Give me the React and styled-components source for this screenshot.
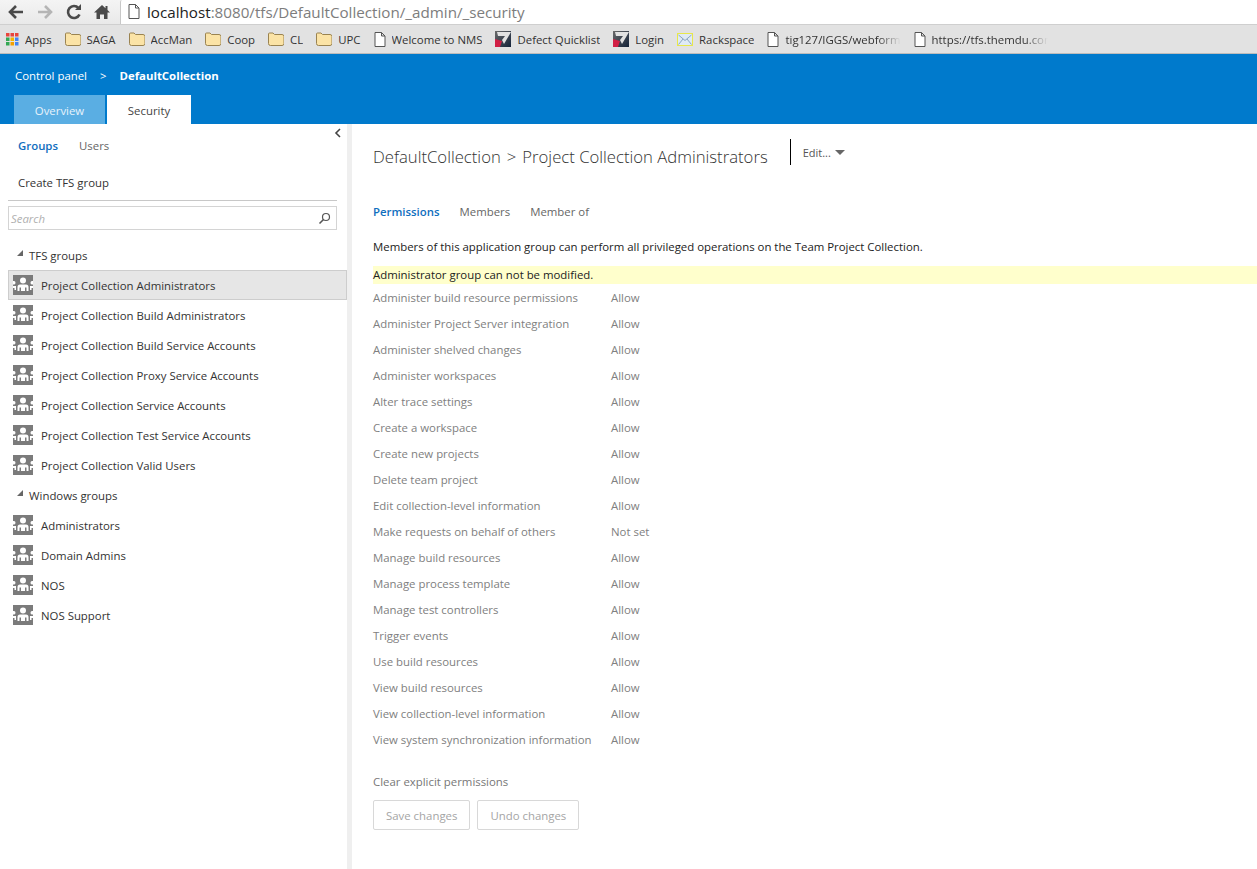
import React from 'react';
import styled, { createGlobalStyle } from 'styled-components';

const tfsGroups = [
  'Project Collection Administrators',
  'Project Collection Build Administrators',
  'Project Collection Build Service Accounts',
  'Project Collection Proxy Service Accounts',
  'Project Collection Service Accounts',
  'Project Collection Test Service Accounts',
  'Project Collection Valid Users',
];
const windowsGroups = ['Administrators', 'Domain Admins', 'NOS', 'NOS Support'];

const permissions = [
  ['Administer build resource permissions', 'Allow'],
  ['Administer Project Server integration', 'Allow'],
  ['Administer shelved changes', 'Allow'],
  ['Administer workspaces', 'Allow'],
  ['Alter trace settings', 'Allow'],
  ['Create a workspace', 'Allow'],
  ['Create new projects', 'Allow'],
  ['Delete team project', 'Allow'],
  ['Edit collection-level information', 'Allow'],
  ['Make requests on behalf of others', 'Not set'],
  ['Manage build resources', 'Allow'],
  ['Manage process template', 'Allow'],
  ['Manage test controllers', 'Allow'],
  ['Trigger events', 'Allow'],
  ['Use build resources', 'Allow'],
  ['View build resources', 'Allow'],
  ['View collection-level information', 'Allow'],
  ['View system synchronization information', 'Allow'],
];

const FolderIcon = () => (
  <svg width="16" height="14" viewBox="0 0 16 14">
    <path d="M.5 3V2Q.5 1 1.500 1h3.500l1.500 1.500h7.500q2 0 2 2v7q0 2-2 2H2.500q-2 0-2-2z" fill="#fbe3a6" stroke="#9a8350" />
  </svg>
);

const PageIcon = () => (
  <svg width="12" height="15" viewBox="0 0 12 15">
    <path d="M1 .5h6.500l3.500 3.500v10.500H1zM7.500.5v3.500H11" fill="#fff" stroke="#555" />
  </svg>
);

const AppsIcon = () => (
  <svg width="13" height="13" viewBox="0 0 13 13">
    {['#e8453c', '#e8453c', '#e8453c', '#34a853', '#f4b400', '#4285f4', '#34a853', '#f4a000', '#4285f4'].map((c, i) => (
      <rect key={i} x={(i % 3) * 4.5} y={Math.floor(i / 3) * 4.5} width="3.500" height="3.500" fill={c} />
    ))}
  </svg>
);

const LogoIcon = () => (
  <svg width="16" height="16" viewBox="0 0 16 16">
    <defs>
      <linearGradient id="logoBg" x1="0" y1="0" x2="1" y2="1">
        <stop offset="0" stopColor="#6a6a6a" />
        <stop offset="1" stopColor="#14233a" />
      </linearGradient>
    </defs>
    <rect width="16" height="16" fill="url(#logoBg)" />
    <path d="M0 8l7 2-2 6H0z" fill="#d11f45" />
    <path d="M2 1h14L9 13 7 9l3-4H3z" fill="#e2e2e2" />
  </svg>
);

const MailIcon = () => (
  <svg width="16" height="13" viewBox="0 0 16 13">
    <rect x=".5" y=".5" width="15" height="12" fill="#dfeaf5" stroke="#e8e84a" />
    <path d="M1.500 2l6.500 5.500L14.500 2M1.500 11.500l4.500-5.500M14.500 11.500L10 6" fill="none" stroke="#8aa5c0" />
  </svg>
);

const GroupIcon = () => (
  <svg width="20" height="20" viewBox="0 0 20 20">
    <rect width="20" height="20" fill="#7b7b7b" />
    <circle cx="10" cy="5.500" r="3" fill="#fff" />
    <path d="M4.500 16v-4q0-2.500 2.500-2.500h6q2.500 0 2.500 2.500v4h-2v-3.500H12V16H8v-3.500H6.500V16z" fill="#fff" />
    <path d="M0 6h1q1.500 0 1.500 1.800T1 9.500H0z" fill="#fff" />
    <path d="M20 6h-1q-1.500 0-1.500 1.800T19 9.500h1z" fill="#fff" />
    <path d="M0 11h3v4H1.500v-2H0zM20 11h-3v4h1.500v-2H20z" fill="#fff" />
  </svg>
);

const Nav = ({ disabled, d }) => (
  <NavButton $disabled={disabled}>
    <svg width="18" height="18" viewBox="0 0 18 18">
      <path d={d} fill="none" stroke="currentColor" strokeWidth="2.600" />
    </svg>
  </NavButton>
);

const Bookmark = ({ icon, label, faded }) => (
  <BookmarkItem>
    {icon}
    <BookmarkLabel $faded={faded}>{label}</BookmarkLabel>
  </BookmarkItem>
);

const GroupList = ({ title, items, selected }) => (
  <>
    <GroupHeader>
      <Caret />
      {title}
    </GroupHeader>
    {items.map((name) => (
      <GroupRow key={name} $selected={name === selected}>
        <GroupIcon />
        {name}
      </GroupRow>
    ))}
  </>
);

export default function App() {
  return (
    <Page>
      <GlobalStyle />
      <AddressBar>
        <Nav d="M16 9H3M9 3L3 9l6 6" />
        <Nav disabled d="M2 9h13M9 3l6 6-6 6" />
        <ReloadButton>
          <svg width="18" height="18" viewBox="0 0 18 18">
            <path d="M14.500 11.500A6 6 0 1 1 13.500 5" fill="none" stroke="currentColor" strokeWidth="2.600" />
            <path d="M10 7h6V1z" fill="currentColor" />
          </svg>
        </ReloadButton>
        <HomeButton>
          <svg width="16" height="16" viewBox="0 0 16 16">
            <path d="M8 1L0 8.500h2.500V15H6v-4.500h4V15h3.500V8.500H16l-2.500-2.400V2h-2v2.200z" fill="currentColor" />
          </svg>
        </HomeButton>
        <UrlField>
          <PageIcon />
          <UrlText>
            <UrlHost>localhost</UrlHost>:8080/tfs/DefaultCollection/_admin/_security
          </UrlText>
        </UrlField>
      </AddressBar>
      <BookmarksBar>
        <Bookmark icon={<AppsIcon />} label="Apps" />
        <Bookmark icon={<FolderIcon />} label="SAGA" />
        <Bookmark icon={<FolderIcon />} label="AccMan" />
        <Bookmark icon={<FolderIcon />} label="Coop" />
        <Bookmark icon={<FolderIcon />} label="CL" />
        <Bookmark icon={<FolderIcon />} label="UPC" />
        <Bookmark icon={<PageIcon />} label="Welcome to NMS" />
        <Bookmark icon={<LogoIcon />} label="Defect Quicklist" />
        <Bookmark icon={<LogoIcon />} label="Login" />
        <Bookmark icon={<MailIcon />} label="Rackspace" />
        <Bookmark icon={<PageIcon />} label="tig127/IGGS/webform" faded />
        <Bookmark icon={<PageIcon />} label="https://tfs.themdu.com" faded />
      </BookmarksBar>

      <Header>
        <Breadcrumb>
          <span>Control panel</span>
          <Separator>&gt;</Separator>
          <strong>DefaultCollection</strong>
        </Breadcrumb>
        <Tabs>
          <Tab>Overview</Tab>
          <Tab $active>Security</Tab>
        </Tabs>
      </Header>

      <Body>
        <Sidebar>
          <CollapseRow>
            <svg width="8" height="10" viewBox="0 0 8 10">
              <path d="M6 1L2 5l4 4" fill="none" stroke="#444" strokeWidth="1.600" />
            </svg>
          </CollapseRow>
          <SideTabs>
            <SideTab $active>Groups</SideTab>
            <SideTab>Users</SideTab>
          </SideTabs>
          <CreateRow>Create TFS group</CreateRow>
          <SearchBox>
            <SearchHint>Search</SearchHint>
            <svg width="13" height="13" viewBox="0 0 13 13">
              <circle cx="8" cy="5" r="3.500" fill="none" stroke="#555" strokeWidth="1.200" />
              <path d="M5.500 7.500L1.500 11.500" stroke="#555" strokeWidth="1.600" />
            </svg>
          </SearchBox>
          <GroupList title="TFS groups" items={tfsGroups} selected="Project Collection Administrators" />
          <GroupList title="Windows groups" items={windowsGroups} />
        </Sidebar>

        <Main>
          <TitleRow>
            <Title>
              DefaultCollection<TitleSeparator>&gt;</TitleSeparator>Project Collection Administrators
            </Title>
            <EditMenu>
              Edit...
              <EditCaret />
            </EditMenu>
          </TitleRow>
          <MainTabs>
            <MainTab $active>Permissions</MainTab>
            <MainTab>Members</MainTab>
            <MainTab>Member of</MainTab>
          </MainTabs>
          <Description>
            Members of this application group can perform all privileged operations on the Team Project Collection.
          </Description>
          <Notice>Administrator group can not be modified.</Notice>
          <div>
            {permissions.map(([name, value]) => (
              <PermissionRow key={name}>
                <PermissionName>{name}</PermissionName>
                <span>{value}</span>
              </PermissionRow>
            ))}
          </div>
          <ClearLink>Clear explicit permissions</ClearLink>
          <Actions>
            <ActionButton>Save changes</ActionButton>
            <ActionButton>Undo changes</ActionButton>
          </Actions>
        </Main>
      </Body>
    </Page>
  );
}

const GlobalStyle = createGlobalStyle`
  html, body {
    margin: 0;
    padding: 0;
    background: #fff;
  }
  body {
    font-family: "Open Sans", "Noto Sans", "Liberation Sans", sans-serif;
    font-size: 11.4px;
    overflow: hidden;
  }
`;

const Page = styled.div`
  width: 1257px;
  height: 869px;
  display: flex;
  flex-direction: column;
  overflow: hidden;
`;

const AddressBar = styled.div`
  height: 24px;
  flex: none;
  display: flex;
  align-items: center;
  padding-left: 7px;
  background: linear-gradient(#f4f4f4, #e9e9e9);
`;

const NavButton = styled.div`
  width: 29px;
  height: 18px;
  color: ${(p) => (p.$disabled ? '#b5b5b5' : '#4a4a4a')};
`;

const ReloadButton = styled.div`
  width: 29px;
  height: 18px;
  color: #4a4a4a;
`;

const HomeButton = styled.div`
  width: 26px;
  height: 16px;
  color: #4a4a4a;
`;

const UrlField = styled.div`
  flex: 1;
  height: 24px;
  display: flex;
  align-items: center;
  gap: 7px;
  padding-left: 7px;
  background: #fff;
  border-left: 1px solid #c8c8c8;
  border-bottom: 1px solid #d0d0d0;
  border-radius: 2px 0 0 0;
`;

const UrlText = styled.div`
  font-size: 15.2px;
  color: #7d7d7d;
  white-space: nowrap;
`;

const UrlHost = styled.span`
  color: #222;
`;

const BookmarksBar = styled.div`
  height: 30px;
  flex: none;
  display: flex;
  align-items: center;
  padding-left: 6px;
  box-sizing: border-box;
  gap: 13px;
  background: #e2e2e2;
  border-top: 1px solid #cfcfcf;
  border-bottom: 1px solid #bcbcbc;
  overflow: hidden;
`;

const BookmarkItem = styled.div`
  display: flex;
  align-items: center;
  gap: 6px;
  flex: none;
`;

const BookmarkLabel = styled.span`
  color: #333;
  white-space: nowrap;
  max-width: ${(p) => (p.$faded ? '116px' : 'none')};
  overflow: hidden;
  ${(p) =>
    p.$faded &&
    `-webkit-mask-image: linear-gradient(90deg, #000 80%, transparent);
     mask-image: linear-gradient(90deg, #000 80%, transparent);`}
`;

const Header = styled.div`
  height: 70px;
  flex: none;
  box-sizing: border-box;
  padding-top: 14px;
  display: flex;
  flex-direction: column;
  justify-content: space-between;
  background: #007acc;
  color: #fff;
`;

const Breadcrumb = styled.div`
  display: flex;
  align-items: center;
  padding-left: 15px;
  line-height: 16px;
  strong {
    font-weight: 700;
  }
`;

const Separator = styled.span`
  margin: 0 13px;
`;

const Tabs = styled.div`
  display: flex;
  gap: 2px;
  padding-left: 14px;
`;

const Tab = styled.div`
  box-sizing: border-box;
  width: ${(p) => (p.$active ? '84px' : '91px')};
  height: 29px;
  padding-top: 1px;
  display: flex;
  align-items: center;
  justify-content: center;
  background: ${(p) => (p.$active ? '#fff' : '#5aaee3')};
  color: ${(p) => (p.$active ? '#444' : '#e8f3fb')};
`;

const Body = styled.div`
  flex: 1;
  display: flex;
  min-height: 0;
`;

const Sidebar = styled.div`
  width: 352px;
  flex: none;
  box-sizing: border-box;
  padding-left: 8px;
  border-right: 5px solid #efefef;
`;

const CollapseRow = styled.div`
  height: 8px;
  padding: 4px 5px 0 0;
  display: flex;
  justify-content: flex-end;
`;

const SideTabs = styled.div`
  display: flex;
  gap: 21px;
  padding-left: 10px;
  height: 18px;
  align-items: center;
`;

const SideTab = styled.div`
  color: ${(p) => (p.$active ? '#106ebe' : '#666')};
  font-weight: ${(p) => (p.$active ? 600 : 400)};
`;

const CreateRow = styled.div`
  margin: 21px 10px 0 0;
  padding: 0 0 9px 10px;
  line-height: 16px;
  color: #333;
  border-bottom: 1px solid #c8c8c8;
`;

const SearchBox = styled.div`
  box-sizing: border-box;
  width: 329px;
  height: 24px;
  margin: 5px 0 10px;
  padding: 0 5px 0 2px;
  display: flex;
  align-items: center;
  justify-content: space-between;
  border: 1px solid #d4d4d4;
`;

const SearchHint = styled.span`
  font-style: italic;
  color: #b0b0b0;
`;

const GroupHeader = styled.div`
  height: 30px;
  display: flex;
  align-items: center;
  padding-left: 9px;
  color: #333;
`;

const Caret = styled.span`
  width: 0;
  height: 0;
  margin: -4px 6px 0 0;
  border-style: solid;
  border-width: 0 0 6px 6px;
  border-color: transparent transparent #666 transparent;
`;

const GroupRow = styled.div`
  box-sizing: border-box;
  height: 30px;
  display: flex;
  align-items: center;
  gap: 8px;
  padding-left: 4px;
  color: #333;
  background: ${(p) => (p.$selected ? '#e6e6e6' : 'transparent')};
  border: 1px solid ${(p) => (p.$selected ? '#cdcdcd' : 'transparent')};
`;

const Main = styled.div`
  flex: 1;
  min-width: 0;
  padding: 14px 0 0 21px;
`;

const TitleRow = styled.div`
  display: flex;
  align-items: flex-start;
  height: 37px;
`;

const Title = styled.div`
  font-size: 16.7px;
  line-height: 38px;
  font-weight: 300;
  color: #333;
`;

const TitleSeparator = styled.span`
  margin: 0 6px;
`;

const EditMenu = styled.div`
  height: 26px;
  margin: 1px 0 0 22px;
  padding-left: 12px;
  display: flex;
  align-items: center;
  gap: 4px;
  border-left: 1px solid #000;
  color: #555;
  font-size: 11px;
`;

const EditCaret = styled.span`
  width: 0;
  height: 0;
  border-style: solid;
  border-width: 5px 5px 0 5px;
  border-color: #666 transparent transparent transparent;
`;

const MainTabs = styled.div`
  display: flex;
  gap: 20px;
  margin-top: 18px;
  height: 36px;
  align-items: center;
`;

const MainTab = styled.div`
  color: ${(p) => (p.$active ? '#106ebe' : '#666')};
  font-weight: ${(p) => (p.$active ? 600 : 400)};
`;

const Description = styled.div`
  margin-top: 9px;
  line-height: 18px;
  color: #222;
`;

const Notice = styled.div`
  margin-top: 10px;
  line-height: 18px;
  background: #ffffcc;
  color: #222;
`;

const PermissionRow = styled.div`
  display: flex;
  height: 26px;
  align-items: center;
  color: #808080;
`;

const PermissionName = styled.span`
  width: 238px;
`;

const ClearLink = styled.div`
  margin-top: 21px;
  line-height: 18px;
  color: #777;
`;

const Actions = styled.div`
  display: flex;
  gap: 7px;
  margin-top: 9px;
`;

const ActionButton = styled.div`
  box-sizing: border-box;
  height: 30px;
  padding: 0 12px;
  display: flex;
  align-items: center;
  border: 1px solid #d8d8d8;
  border-radius: 2px;
  color: #a5a5a5;
`;
